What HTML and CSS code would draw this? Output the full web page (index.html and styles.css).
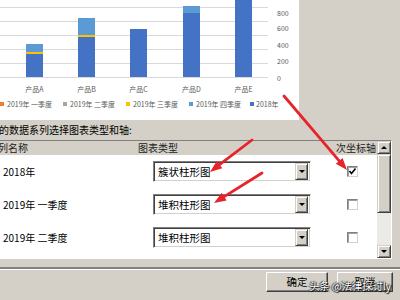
FILE: index.html
```html
<!DOCTYPE html>
<html>
<head>
<meta charset="utf-8">
<link rel="stylesheet" href="styles.css">
</head>
<body>
<div class="dialog">
  <div class="top">
    <div class="chart">
      <svg width="299" height="120" viewBox="0 0 299 120">
        <g stroke="#d9d9d9" stroke-width="1">
          <line x1="0" y1="7.5" x2="268" y2="7.5"/>
          <line x1="0" y1="21.5" x2="268" y2="21.5"/>
          <line x1="0" y1="35.5" x2="268" y2="35.5"/>
          <line x1="0" y1="49.5" x2="268" y2="49.5"/>
          <line x1="0" y1="63.5" x2="268" y2="63.5"/>
          <line x1="0" y1="77.5" x2="268" y2="77.5"/>
        </g>
        <rect x="26" y="54" width="17" height="23" fill="#4472c4"/>
        <rect x="26" y="52" width="17" height="2" fill="#ffc000"/>
        <rect x="26" y="44" width="17" height="8" fill="#5b9bd5"/>
        <rect x="78" y="37" width="17" height="40" fill="#4472c4"/>
        <rect x="78" y="35" width="17" height="2" fill="#ffc000"/>
        <rect x="78" y="18" width="17" height="17" fill="#5b9bd5"/>
        <rect x="130" y="29" width="17" height="48" fill="#4472c4"/>
        <rect x="183" y="13" width="17" height="64" fill="#4472c4"/>
        <rect x="183" y="6" width="17" height="7" fill="#5b9bd5"/>
        <rect x="235" y="0" width="17" height="77" fill="#4472c4"/>
        <g class="ax">
          <text x="34.5" y="92" text-anchor="middle">产品A</text>
          <text x="86.5" y="92" text-anchor="middle">产品B</text>
          <text x="138.5" y="92" text-anchor="middle">产品C</text>
          <text x="191.5" y="92" text-anchor="middle">产品D</text>
          <text x="243.5" y="92" text-anchor="middle">产品E</text>
          <text x="277" y="15.5">800</text>
          <text x="277" y="31">600</text>
          <text x="277" y="47.5">400</text>
          <text x="277" y="64">200</text>
          <text x="277" y="80.5">0</text>
        </g>
        <rect x="0" y="102" width="4" height="4" fill="#ed7d31"/>
        <rect x="63" y="102" width="4" height="4" fill="#a5a5a5"/>
        <rect x="126" y="102" width="4" height="4" fill="#ffc000"/>
        <rect x="189" y="102" width="4" height="4" fill="#5b9bd5"/>
        <rect x="250" y="102" width="4" height="4" fill="#4472c4"/>
        <g class="ax">
          <text x="7" y="106.5">2019年 一季度</text>
          <text x="70" y="106.5">2019年 二季度</text>
          <text x="133" y="106.5">2019年 三季度</text>
          <text x="196" y="106.5">2019年 四季度</text>
          <text x="256" y="106.5">2018年</text>
        </g>
      </svg>
    </div>
  </div>
  <div class="caption">的数据系列选择图表类型和轴:</div>
  <div class="list">
    <div class="list-main">
      <div class="list-head">
        <div class="c-name head-name">列名称</div>
        <div class="c-type">图表类型</div>
        <div class="c-axis head-axis">次坐标轴</div>
      </div>
      <div class="row">
        <div class="c-name">2018年</div>
        <div class="c-type"><div class="combo"><span class="combo-text">簇状柱形图</span><span class="combo-btn"><span class="tri"></span></span></div></div>
        <div class="c-axis"><span class="chk"><svg width="9" height="9" viewBox="0 0 9 9"><polyline points="1.5,4 3.5,6.5 7.5,1.5" fill="none" stroke="#000" stroke-width="1.6"/></svg></span></div>
      </div>
      <div class="row">
        <div class="c-name">2019年 一季度</div>
        <div class="c-type"><div class="combo"><span class="combo-text">堆积柱形图</span><span class="combo-btn"><span class="tri"></span></span></div></div>
        <div class="c-axis"><span class="chk"></span></div>
      </div>
      <div class="row">
        <div class="c-name">2019年 二季度</div>
        <div class="c-type"><div class="combo"><span class="combo-text">堆积柱形图</span><span class="combo-btn"><span class="tri"></span></span></div></div>
        <div class="c-axis"><span class="chk"></span></div>
      </div>
    </div>
    <div class="scrollbar">
      <div class="sb-btn"><span class="tri up"></span></div>
      <div class="sb-thumb"></div>
      <div class="sb-track"></div>
      <div class="sb-btn"><span class="tri"></span></div>
    </div>
  </div>
  <div class="sep"></div>
  <div class="buttons">
    <div class="btn btn-ok">确定</div>
    <div class="btn btn-cancel">取消</div>
  </div>
</div>
<svg class="arrows" width="400" height="300" viewBox="0 0 400 300">
  <g stroke="#e8232a" stroke-width="2.8" stroke-linecap="round">
    <line x1="252" y1="140" x2="219.5" y2="164.7"/>
    <line x1="262" y1="173" x2="224.2" y2="196.6"/>
    <line x1="284" y1="96" x2="339.2" y2="160.9"/>
  </g>
  <g fill="#e8232a">
    <polygon points="210,172 222.3,168.3 216.8,161.1"/>
    <polygon points="214,203 226.6,200.5 221.8,192.8"/>
    <polygon points="347,170 335.8,163.8 342.6,158"/>
  </g>
</svg>
<div class="watermark">头条 @法律探讨ly</div>
</body>
</html>
```
FILE: styles.css
```css
html, body {
  margin: 0;
  padding: 0;
}
body {
  width: 400px;
  height: 300px;
  overflow: hidden;
  background: #d4d0c8;
  font-family: "Noto Sans CJK SC", "Noto Sans", sans-serif;
  color: #000;
  position: relative;
}
.dialog {
  display: flex;
  flex-direction: column;
  width: 400px;
  height: 300px;
}
.top {
  height: 120px;
  display: flex;
}
.chart {
  width: 299px;
  height: 120px;
  background: #fff;
}
.chart svg {
  display: block;
}
.ax text {
  font-family: "Noto Sans CJK SC", sans-serif;
  font-size: 7px;
  fill: #595959;
}
.caption {
  height: 20px;
  line-height: 20px;
  font-size: 10px;
  margin-left: -1px;
  white-space: nowrap;
}
.list {
  display: flex;
  width: 391px;
  height: 117px;
  border-top: 1px solid #808080;
  border-right: 1px solid #fff;
  border-bottom: 1px solid #fff;
  box-shadow: inset 0 1px 0 #404040;
}
.list-main {
  flex: 1;
  display: flex;
  flex-direction: column;
  background: #fff;
}
.list-head {
  display: flex;
  height: 14px;
  line-height: 14px;
  background: #d4d0c8;
  font-size: 10px;
  color: #222;
}
.c-name {
  width: 138px;
  padding-left: 3px;
  box-sizing: border-box;
  white-space: nowrap;
}
.head-name {
  padding-left: 0;
  margin-left: -2px;
  width: 140px;
}
.c-type {
  width: 187px;
}
.c-axis {
  width: 52px;
  white-space: nowrap;
}
.head-axis {
  text-align: right;
  padding-right: 1px;
  box-sizing: border-box;
}
.row {
  display: flex;
  align-items: center;
  height: 33px;
  font-size: 10px;
}
.row .c-type {
  padding-left: 15px;
  box-sizing: border-box;
}
.row .c-axis {
  padding-left: 22px;
  box-sizing: border-box;
  display: flex;
  align-items: center;
}
.combo {
  display: flex;
  align-items: center;
  width: 158px;
  height: 21px;
  box-sizing: border-box;
  border: 1px solid;
  border-color: #808080 #fff #fff #808080;
  box-shadow: inset 1px 1px 0 #404040, inset -1px -1px 0 #d4d0c8;
  background: #fff;
  padding: 2px 2px 2px 4px;
}
.combo-text {
  flex: 1;
  font-size: 10.5px;
  line-height: 17px;
}
.combo-btn {
  width: 13px;
  height: 17px;
  box-sizing: border-box;
  background: #d4d0c8;
  border: 1px solid;
  border-color: #d4d0c8 #404040 #404040 #d4d0c8;
  box-shadow: inset 1px 1px 0 #fff, inset -1px -1px 0 #808080;
  display: flex;
  align-items: center;
  justify-content: center;
}
.tri {
  width: 0;
  height: 0;
  border-left: 3px solid transparent;
  border-right: 3px solid transparent;
  border-top: 3px solid #000;
}
.tri.up {
  border-top: 0;
  border-bottom: 3px solid #000;
}
.chk {
  width: 11px;
  height: 11px;
  box-sizing: border-box;
  border: 1px solid;
  border-color: #808080 #d4d0c8 #d4d0c8 #808080;
  box-shadow: inset 1px 1px 0 #a0a0a0;
  background: #fff;
  display: flex;
  align-items: center;
  justify-content: center;
}
.chk svg {
  display: block;
}
.scrollbar {
  width: 14px;
  display: flex;
  flex-direction: column;
  background: #eceae6;
}
.sb-btn {
  height: 13px;
  box-sizing: border-box;
  background: #d4d0c8;
  border: 1px solid;
  border-color: #d4d0c8 #404040 #404040 #d4d0c8;
  box-shadow: inset 1px 1px 0 #fff, inset -1px -1px 0 #808080;
  display: flex;
  align-items: center;
  justify-content: center;
}
.sb-thumb {
  height: 59px;
  box-sizing: border-box;
  background: #d4d0c8;
  border: 1px solid;
  border-color: #d4d0c8 #404040 #404040 #d4d0c8;
  box-shadow: inset 1px 1px 0 #fff, inset -1px -1px 0 #808080;
}
.sb-track {
  flex: 1;
}
.sep {
  margin-top: 8px;
  height: 0;
  border-top: 2px solid #808080;
  border-bottom: 1px solid #fff;
}
.buttons {
  display: flex;
  justify-content: flex-end;
  gap: 9px;
  padding-right: 7px;
  margin-top: 2px;
}
.btn {
  height: 20px;
  box-sizing: border-box;
  border: 1px solid;
  border-color: #fff #404040 #404040 #fff;
  box-shadow: inset -1px -1px 0 #808080;
  font-size: 10.5px;
  line-height: 18px;
  text-align: center;
}
.btn-ok {
  width: 62px;
}
.btn-cancel {
  width: 56px;
}
.arrows {
  position: absolute;
  left: 0;
  top: 0;
  pointer-events: none;
}
.watermark {
  position: absolute;
  left: 309px;
  top: 278px;
  font-size: 10.5px;
  letter-spacing: -0.2px;
  color: #fff;
  white-space: nowrap;
  text-shadow: 0 0 1px #000, 1px 1px 1px #000, -1px 0 1px #333;
}
```
